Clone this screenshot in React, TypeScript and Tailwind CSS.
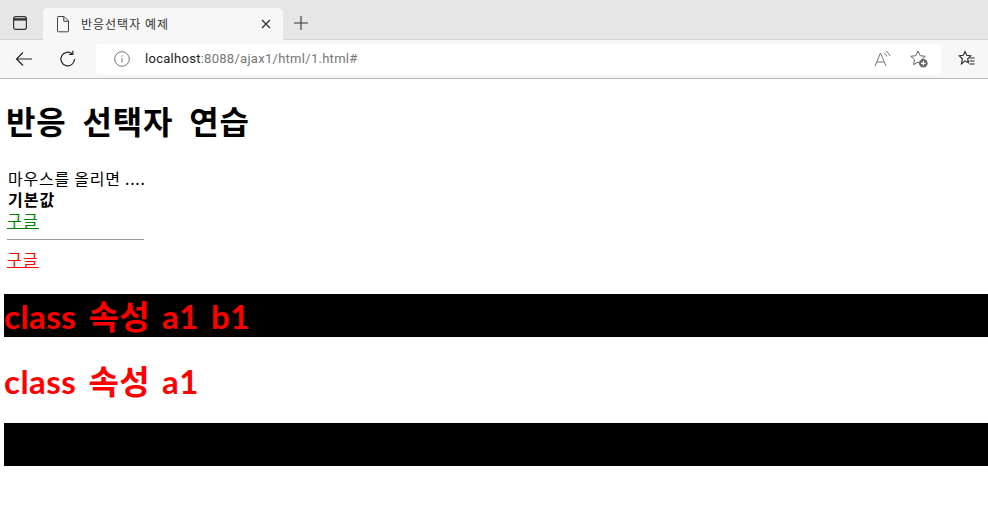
const ko = "font-['Noto_Sans_CJK_KR','Noto_Sans',sans-serif]";
const mixed = "font-['Lato','Noto_Sans_CJK_KR',sans-serif]";

function TabStrip() {
  return (
    <div className="flex h-10 items-end border-b border-[#d4d4d4] bg-[#e6e6e6]">
      <div className="flex h-8 w-[43px] items-center justify-center">
        <svg width="16" height="16" viewBox="0 0 16 16" fill="none" stroke="#333" strokeWidth="1.2" className="ml-[-3px]">
          <rect x="1.6" y="1.6" width="12.8" height="12.8" rx="2.2" />
          <path d="M1.6 4.4h12.8" strokeWidth="2.4" />
        </svg>
      </div>
      <div className="mb-[-1px] flex h-8 w-[240px] items-center rounded-t-[5px] bg-[#f7f7f7]">
        <svg width="16" height="18" viewBox="0 0 16 18" fill="none" stroke="#444" strokeWidth="1" className="ml-[12px]">
          <path d="M3 1.5h6l4.5 4.5v10a.8.8 0 0 1-.8.8H3.3a.8.8 0 0 1-.8-.8V2.300a.8.8 0 0 1 .8-.8z" />
          <path d="M8.800 1.500v4.800h4.700" />
        </svg>
        <span className={`ml-[10px] flex-1 text-[12px] tracking-[1px] text-[#333] ${ko}`}>반응선택자 예제</span>
        <svg width="10" height="10" viewBox="0 0 10 10" stroke="#333" strokeWidth="1.3" className="mr-[12px]">
          <path d="M1 1l8 8M9 1l-8 8" />
        </svg>
      </div>
      <div className="flex h-8 w-[36px] items-center justify-center">
        <svg width="16" height="16" viewBox="0 0 16 16" stroke="#333" strokeWidth="1.1">
          <path d="M8 1v14M1 8h14" />
        </svg>
      </div>
    </div>
  );
}

function Toolbar() {
  return (
    <div className="flex h-[39px] items-center border-b border-[#b8b8b8] bg-[#f7f7f7] pb-[1px]">
      <div className="flex w-[48px] justify-center">
        <svg width="18" height="16" viewBox="0 0 18 16" fill="none" stroke="#222" strokeWidth="1.2">
          <path d="M17 8H1.500M8 1.500L1.500 8 8 14.500" />
        </svg>
      </div>
      <div className="flex w-[40px] justify-center">
        <svg width="18" height="18" viewBox="0 0 18 18" fill="none" stroke="#222" strokeWidth="1.2">
          <path d="M15.500 9a6.800 6.800 0 1 1-2.200-5" />
          <path d="M13.800 0.800v3.700h-3.700" />
        </svg>
      </div>
      <div className="ml-[8px] flex h-[30px] w-[845px] items-center rounded-[4px] bg-white">
        <svg width="16" height="16" viewBox="0 0 16 16" fill="none" stroke="#777" strokeWidth="1" className="ml-[18px]">
          <circle cx="8" cy="8" r="7.300" />
          <path d="M8 7v4.500" />
          <path d="M8 4.300v1.300" />
        </svg>
        <span className="ml-[15px] flex-1 pt-[1px] font-['Roboto',sans-serif] text-[13px] tracking-[0.28px]">
          <span className="text-[#222]">localhost</span>
          <span className="text-[#767676]">:8088/ajax1/html/1.html#</span>
        </span>
        <svg width="18" height="18" viewBox="0 0 18 18" fill="none" stroke="#777" strokeWidth="1" className="mr-[17px]">
          <path d="M1 16L6.500 3 12 16M3 12h7" />
          <path d="M10 3.500a5 5 0 0 1 3 3M11.500 1a8 8 0 0 1 4.500 5" />
        </svg>
        <svg width="20" height="20" viewBox="0 0 20 20" fill="none" stroke="#666" strokeWidth="1" className="mr-[12px]">
          <path d="M9 2l2.200 4.700 5 .6-3.700 3.400 1 5-4.500-2.500-4.500 2.500 1-5L1.800 7.300l5-.6z" />
          <circle cx="14.300" cy="14.300" r="4.300" fill="#666" stroke="none" />
          <path d="M14.300 12v4.600M12 14.300h4.600" stroke="#fff" strokeWidth="1.200" />
        </svg>
      </div>
      <div className="ml-[4px] flex flex-1 justify-center">
        <svg width="18" height="18" viewBox="0 0 18 18" fill="none" stroke="#222" strokeWidth="1.1">
          <path d="M7 1.500l1.700 3.800 4 .5-3 2.800.8 4.200-3.500-2-3.500 3 .8-5-3-3 4-.5z" />
          <path d="M11.500 8h5M11.500 11h5M11.500 14h5" />
        </svg>
      </div>
    </div>
  );
}

function Page() {
  return (
    <div className={`pl-[4px] text-black ${ko}`}>
      <h1 className="mt-[18px] ml-[2px] text-[32px] leading-[46px] font-bold tracking-[0.8px] [word-spacing:8px]">반응 선택자 연습</h1>
      <div className="mt-[25px] ml-[3px] w-[137px] text-[16px] leading-[21px]">
        <div className="pl-[1px] tracking-[0.75px] whitespace-nowrap">마우스를 올리면 ....</div>
        <div className="pl-[1px] font-bold tracking-[1px]">기본값</div>
        <a href="#" className="block tracking-[1.2px] text-[#008000] underline">구글</a>
        <hr className="mt-[8px] border-t border-[#999]" />
        <a href="#" className="mt-[9px] block tracking-[1.2px] text-[#ff0000] underline">구글</a>
      </div>
      <h2 className={`mt-[24px] h-[43px] bg-black text-[33px] leading-[45px] font-bold tracking-[0.5px] text-[#ff0000] [word-spacing:3.5px] ${mixed}`}>class 속성 a1 b1</h2>
      <h2 className={`mt-[21.5px] h-[43px] text-[33px] leading-[44px] font-bold tracking-[0.5px] text-[#ff0000] [word-spacing:3.5px] ${mixed}`}>class 속성 a1</h2>
      <div className="mt-[21.5px] h-[43px] bg-black" />
    </div>
  );
}

export default function App() {
  return (
    <div className="h-[508px] w-[988px] overflow-hidden bg-white">
      <TabStrip />
      <Toolbar />
      <Page />
    </div>
  );
}
